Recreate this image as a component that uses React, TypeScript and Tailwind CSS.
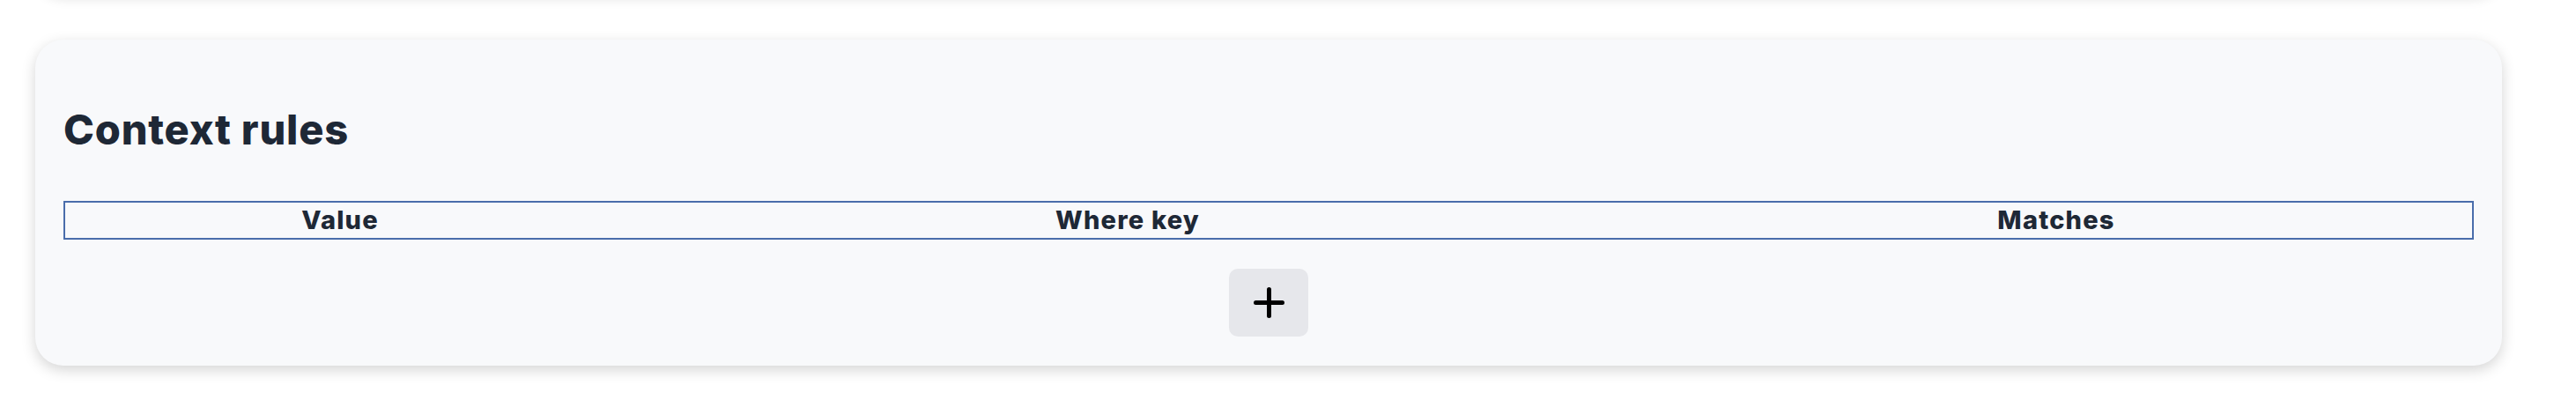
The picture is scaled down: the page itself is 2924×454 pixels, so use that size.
import React from 'react'

const columns = ['Value', 'Where key', 'Matches']

const PlusIcon: React.FC = () => (
  <svg width="35" height="35" viewBox="0 0 35 35" fill="none" stroke="#000" strokeWidth="5" strokeLinecap="round">
    <path d="M2.5 17.5h30M17.5 2.5v30" />
  </svg>
)

const App: React.FC = () => {
  return (
    <div className="h-[454px] overflow-hidden bg-white font-['Inter','Liberation_Sans',sans-serif]">
      <div className="-mt-[106px] flex flex-col gap-[51px] pl-[40px] pr-[84px]">
        {/* previous card, only its shadow shows */}
        <div className="h-[100px] rounded-[32px] bg-[#f8f9fb] shadow-[0_4px_14px_rgba(0,0,0,0.12)]" />

        {/* Context rules */}
        <div className="rounded-[32px] bg-[#f8f9fb] px-[32px] pt-[32px] pb-[33px] shadow-[0_5px_16px_rgba(0,0,0,0.17)]">
          <h2 className="mt-[42px] text-[47px] font-extrabold leading-[56px] tracking-[0.8px] text-[#1e2836]">
            Context rules
          </h2>
          <div className="mt-[53px] grid h-[44px] grid-cols-[624px_1164px_1fr] items-center border-2 border-[#4a6dab]">
            {columns.map(col => (
              <div key={col} className="text-center text-[29px] font-extrabold leading-[40px] tracking-[1.2px] text-[#1e2836]">
                {col}
              </div>
            ))}
          </div>
          <div className="mt-[33px] flex justify-center">
            <button className="flex h-[77px] w-[90px] items-center justify-center rounded-[10px] bg-[#e6e7eb]">
              <PlusIcon />
            </button>
          </div>
        </div>
      </div>
    </div>
  )
}

export default App
